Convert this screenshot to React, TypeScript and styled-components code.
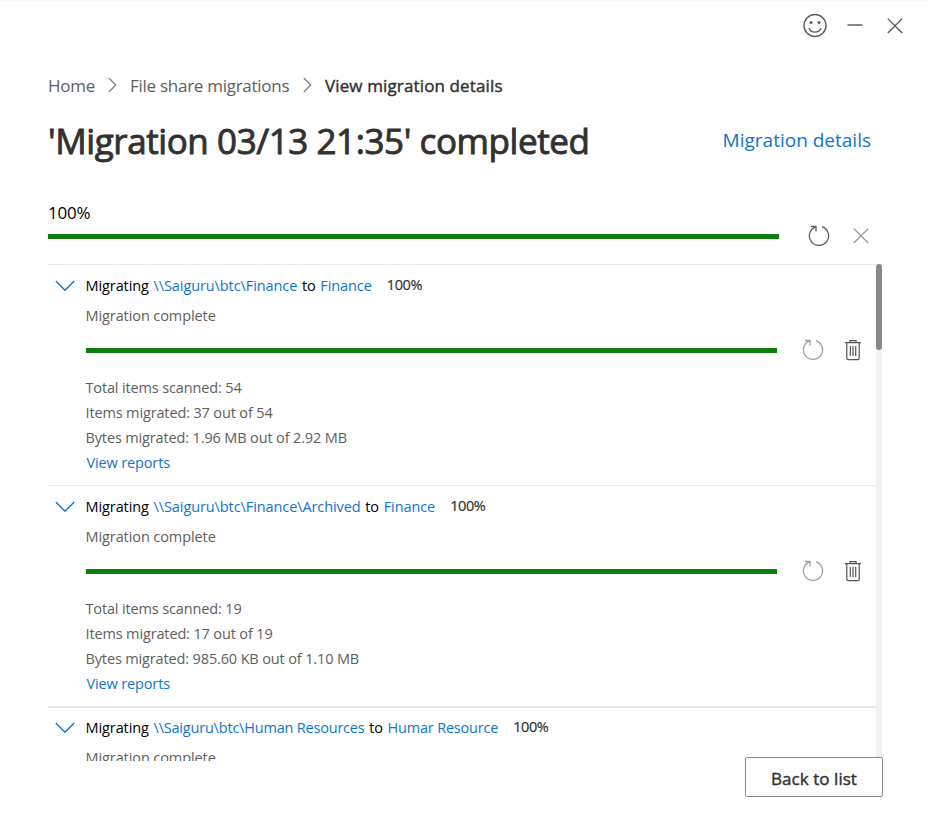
import React from "react";
import styled, { createGlobalStyle } from "styled-components";

const BLUE = "#0f74cf";
const GREEN = "#107c10";

const GlobalStyle = createGlobalStyle`
  *, *::before, *::after { box-sizing: border-box; }
  body {
    margin: 0;
    background: #fff;
    font-family: "Open Sans", "Noto Sans", sans-serif;
    color: #000;
  }
  a { color: ${BLUE}; text-decoration: none; }
  svg { display: block; fill: none; flex: none; }
`;

const Window = styled.div`
  width: 928px;
  height: 823px;
  overflow: hidden;
  border-top: 1px solid #f8f8f8;
  display: flex;
  flex-direction: column;
`;

const TitleBar = styled.div`
  display: flex;
  align-items: center;
  justify-content: flex-end;
  gap: 16px;
  height: 49px;
  padding-right: 21.5px;
`;

const IconButton = styled.button`
  display: flex;
  align-items: center;
  justify-content: center;
  width: 24px;
  height: 24px;
  padding: 0;
  border: 0;
  background: none;
`;

const Content = styled.main`
  display: flex;
  flex-direction: column;
  padding-left: 48px;
`;

const Breadcrumb = styled.nav`
  display: flex;
  align-items: center;
  height: 24px;
  margin-top: 23px;
  font-size: 17px;
  line-height: 24px;
  white-space: nowrap;
`;

const Crumb = styled.span<{ $width: number; $current?: boolean }>`
  width: ${(p) => p.$width}px;
  padding-top: 1px;
  color: ${(p) => (p.$current ? "#323130" : "#605e5c")};
  -webkit-text-stroke: ${(p) => (p.$current ? "0.4px #323130" : "0")};
  letter-spacing: ${(p) => (p.$current ? "0.13px" : "-0.27px")};
`;

const Separator = styled.span`
  display: flex;
  justify-content: center;
  width: 35px;
`;

const Header = styled.header`
  display: flex;
  align-items: center;
  justify-content: space-between;
  height: 50px;
  margin-top: 19px;
  padding-right: 57px;
  white-space: nowrap;
`;

const Title = styled.h1`
  margin: 0;
  font-size: 35px;
  line-height: 50px;
  font-weight: 400;
  letter-spacing: -0.42px;
  color: #323130;
  -webkit-text-stroke: 0.9px #323130;
`;

const DetailsLink = styled.a`
  font-size: 19px;
  line-height: 30px;
  margin-top: -3px;
`;

const Overall = styled.section`
  margin-top: 34px;
  height: 64px;
`;

const OverallPercent = styled.div`
  height: 24px;
  padding-top: 1px;
  font-size: 17px;
  line-height: 24px;
  letter-spacing: -0.2px;
`;

const ProgressRow = styled.div<{ $height: number }>`
  display: flex;
  align-items: center;
  height: ${(p) => p.$height}px;
`;

const Bar = styled.div<{ $width: number }>`
  width: ${(p) => p.$width}px;
  height: 5px;
  background: ${GREEN};
`;

const Actions = styled.div<{ $gap: number; $offset: number }>`
  display: flex;
  align-items: center;
  gap: ${(p) => p.$gap}px;
  margin-left: ${(p) => p.$offset}px;
`;

const ListFrame = styled.section`
  display: flex;
  width: 834px;
  height: 497px;
  overflow: hidden;
`;

const Rows = styled.div`
  flex: 1;
`;

const Track = styled.div`
  width: 6px;
  background: #f1f1f1;
`;

const Thumb = styled.div`
  height: 86px;
  border-radius: 3px;
  background: #888;
`;

const Task = styled.article<{ $thick?: boolean }>`
  display: flex;
  height: 221px;
  padding-top: ${(p) => (p.$thick ? 5 : 6)}px;
  border-top: ${(p) => (p.$thick ? 2 : 1)}px solid #e8e8e8;
`;

const Toggle = styled.div`
  width: 37.5px;
  padding: 9px 0 0 6.5px;
`;

const TaskBody = styled.div`
  flex: 1;
  font-size: 14.5px;
  letter-spacing: -0.09px;
  white-space: nowrap;
`;

const TaskHeading = styled.div`
  display: flex;
  height: 30px;
  line-height: 30px;
  white-space: pre;
  word-spacing: 1px;
`;

const PathLink = styled.a<{ $tracking?: number }>`
  word-spacing: 0;
  letter-spacing: ${(p) => p.$tracking ?? -0.09}px;
`;

const TaskPercent = styled.span`
  margin: -1px 0 0 15px;
  color: #323130;
  letter-spacing: -0.4px;
  -webkit-text-stroke: 0.2px #323130;
`;

const Status = styled.div`
  height: 29px;
  line-height: 30px;
  color: #605e5c;
`;

const TaskProgress = styled(ProgressRow)`
  padding-left: 0.5px;
`;

const Stats = styled.div`
  padding-top: 5px;
  line-height: 25px;
  color: #605e5c;
  letter-spacing: -0.14px;
`;

const ReportLink = styled.a`
  display: block;
  padding-left: 1px;
`;

const Footer = styled.footer`
  position: relative;
  z-index: 1;
  display: flex;
  justify-content: flex-end;
  margin-top: -4px;
  padding-right: 45px;
`;

const BackButton = styled.button`
  width: 138px;
  height: 40px;
  padding: 3px 0 0;
  border: 1px solid #8a8886;
  border-radius: 2px;
  background: #fff;
  font: 400 17px/24px "Open Sans", "Noto Sans", sans-serif;
  letter-spacing: 0.05px;
  color: #323130;
  -webkit-text-stroke: 0.4px #323130;
`;

const SmileIcon = () => (
  <svg width="24" height="24" viewBox="0 0 24 24" stroke="#5c5c5c" strokeWidth="1.4">
    <circle cx="12" cy="11.5" r="11" />
    <path d="M6 14a6.4 6.4 0 0 0 12 0" />
    <circle cx="8" cy="8.4" r="1.5" fill="#5c5c5c" stroke="none" />
    <circle cx="16" cy="8.4" r="1.5" fill="#5c5c5c" stroke="none" />
  </svg>
);

const MinimizeIcon = () => (
  <svg width="16" height="16" viewBox="0 0 16 16" stroke="#555" strokeWidth="1.4">
    <path d="M.5 7h15" />
  </svg>
);

const CloseIcon = ({ color }: { color: string }) => (
  <svg width="16" height="16" viewBox="0 0 16 16" stroke={color} strokeWidth="1.3">
    <path d="M.8.6l14.4 14.4M15.2.6L.8 15" />
  </svg>
);

const RefreshIcon = ({ color }: { color: string }) => (
  <svg width="22" height="22" viewBox="0 0 22 22" stroke={color} strokeWidth="1.3">
    <path d="M14 1.7A9.6 9.6 0 1 1 7.7 1.8" />
    <path d="M3 1.5h5v5" />
  </svg>
);

const TrashIcon = () => (
  <svg width="18" height="22" viewBox="0 0 18 22" stroke="#55565a" strokeWidth="1.2">
    <path d="M1 3.7h16M6 3.7V1.6h6v2.1M2.8 3.7v15.5q0 1.4 1.4 1.4h9.6q1.4 0 1.4-1.4V3.7M6.3 7v10M9 7v10M11.7 7v10" />
  </svg>
);

const ChevronRight = () => (
  <svg width="9" height="16" viewBox="0 0 9 16" stroke="#777" strokeWidth="1.1">
    <path d="M.8 1l7 7-7 7" />
  </svg>
);

const ChevronDown = () => (
  <svg width="20" height="12" viewBox="0 0 20 12" stroke={BLUE} strokeWidth="1.4">
    <path d="M.8 1l9.2 9.2L19.2 1" />
  </svg>
);

interface Migration {
  source: string;
  target: string;
  scanned: number;
  migrated: number;
  bytes: string;
  totalBytes: string;
  tracking?: number;
}

const migrations: Migration[] = [
  { source: "\\\\Saiguru\\btc\\Finance", target: "Finance", scanned: 54, migrated: 37, bytes: "1.96 MB", totalBytes: "2.92 MB" },
  { source: "\\\\Saiguru\\btc\\Finance\\Archived", target: "Finance", scanned: 19, migrated: 17, bytes: "985.60 KB", totalBytes: "1.10 MB" },
  { source: "\\\\Saiguru\\btc\\Human Resources", target: "Humar Resource", scanned: 0, migrated: 0, bytes: "", totalBytes: "", tracking: -0.2 },
];

const MigrationTask = ({ item, thick }: { item: Migration; thick?: boolean }) => (
  <Task $thick={thick}>
    <Toggle>
      <ChevronDown />
    </Toggle>
    <TaskBody>
      <TaskHeading>
        <span>Migrating </span>
        <PathLink $tracking={item.tracking}>{item.source}</PathLink>
        <span> to </span>
        <PathLink $tracking={item.tracking}>{item.target}</PathLink>
        <TaskPercent>100%</TaskPercent>
      </TaskHeading>
      <Status>Migration complete</Status>
      {item.scanned > 0 && (
        <>
          <TaskProgress $height={40}>
            <Bar $width={691} />
            <Actions $gap={20.5} $offset={24.5}>
              <RefreshIcon color="#a19f9d" />
              <TrashIcon />
            </Actions>
          </TaskProgress>
          <Stats>
            <div>Total items scanned: {item.scanned}</div>
            <div>Items migrated: {item.migrated} out of {item.scanned}</div>
            <div>Bytes migrated: {item.bytes} out of {item.totalBytes}</div>
            <ReportLink>View reports</ReportLink>
          </Stats>
        </>
      )}
    </TaskBody>
  </Task>
);

export default function App() {
  return (
    <>
      <GlobalStyle />
      <Window>
        <TitleBar>
          <IconButton aria-label="Feedback"><SmileIcon /></IconButton>
          <IconButton aria-label="Minimize"><MinimizeIcon /></IconButton>
          <IconButton aria-label="Close"><CloseIcon color="#555" /></IconButton>
        </TitleBar>
        <Content>
          <Breadcrumb>
            <Crumb $width={47}>Home</Crumb>
            <Separator><ChevronRight /></Separator>
            <Crumb $width={160}>File share migrations</Crumb>
            <Separator><ChevronRight /></Separator>
            <Crumb $width={180} $current>View migration details</Crumb>
          </Breadcrumb>
          <Header>
            <Title>'Migration 03/13 21:35' completed</Title>
            <DetailsLink>Migration details</DetailsLink>
          </Header>
          <Overall>
            <OverallPercent>100%</OverallPercent>
            <ProgressRow $height={24}>
              <Bar $width={731} />
              <Actions $gap={23} $offset={29}>
                <RefreshIcon color="#605e5c" />
                <CloseIcon color="#979593" />
              </Actions>
            </ProgressRow>
          </Overall>
          <ListFrame>
            <Rows>
              {migrations.map((item, i) => (
                <MigrationTask key={item.source} item={item} thick={i === 2} />
              ))}
            </Rows>
            <Track><Thumb /></Track>
          </ListFrame>
          <Footer>
            <BackButton>Back to list</BackButton>
          </Footer>
        </Content>
      </Window>
    </>
  );
}
